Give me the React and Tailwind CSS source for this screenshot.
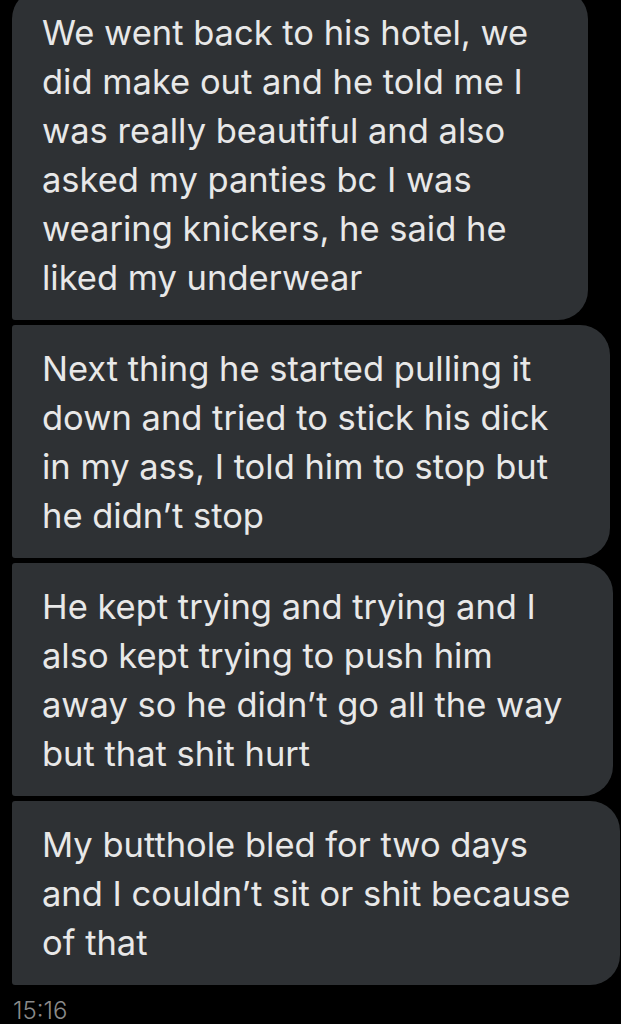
import React from "react";

const messages = [
    {
        width: "w-[576px]",
        first: true,
        lines: [
            "We went back to his hotel, we",
            "did make out and he told me I",
            "was really beautiful and also",
            "asked my panties bc I was",
            "wearing knickers, he said he",
            "liked my underwear",
        ],
    },
    {
        width: "w-[598px]",
        lines: [
            "Next thing he started pulling it",
            "down and tried to stick his dick",
            "in my ass, I told him to stop but",
            "he didn\u2019t stop",
        ],
    },
    {
        width: "w-[601px]",
        lines: [
            "He kept trying and trying and I",
            "also kept trying to push him",
            "away so he didn\u2019t go all the way",
            "but that shit hurt",
        ],
    },
    {
        width: "w-[608px]",
        lines: [
            "My butthole bled for two days",
            "and I couldn\u2019t sit or shit because",
            "of that",
        ],
    },
];

const App = () => {
    return (
        <div className="h-[1024px] overflow-hidden bg-black font-['Inter',sans-serif]">
            <div className="-mt-[11px] flex flex-col gap-[5px] pl-[12px]">
                {messages.map((m, i) => (
                    <div
                        key={i}
                        className={`${m.width} ${
                            m.first ? "rounded-tl-[30px]" : "rounded-tl-[3px]"
                        } rounded-bl-[3px] rounded-r-[30px] bg-[#2e3134] pl-[30px] pt-[19px] pb-[18px] text-[34.5px] leading-[49px] font-normal text-[#e8e8e8] whitespace-nowrap`}
                    >
                        {m.lines.map((line, j) => (
                            <div key={j}>{line}</div>
                        ))}
                    </div>
                ))}
            </div>
            <div className="mt-[12px] pl-[13px] text-[24px] leading-[28px] font-light text-[#8a8a8a]">
                15:16
            </div>
        </div>
    );
};

export default App;
